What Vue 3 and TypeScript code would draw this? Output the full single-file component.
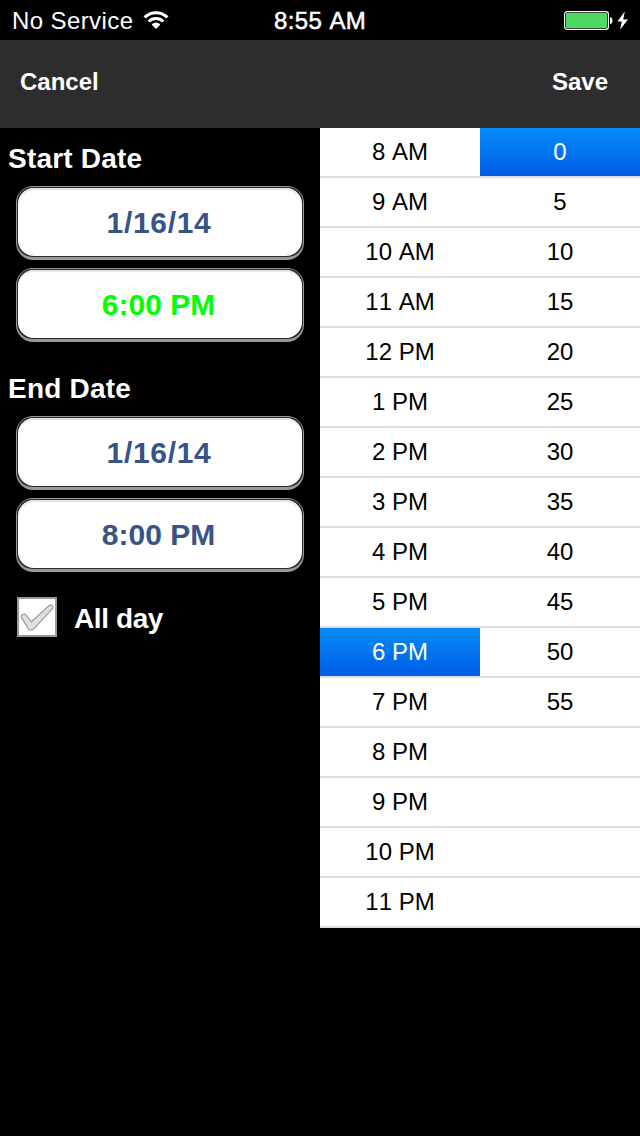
<script setup lang="ts">
interface Section {
  title: string
  date: string
  time: string
  active: boolean
}

const sections: Section[] = [
  { title: 'Start Date', date: '1/16/14', time: '6:00 PM', active: true },
  { title: 'End Date', date: '1/16/14', time: '8:00 PM', active: false },
]

const hours: string[] = [
  '8 AM', '9 AM', '10 AM', '11 AM', '12 PM', '1 PM', '2 PM', '3 PM',
  '4 PM', '5 PM', '6 PM', '7 PM', '8 PM', '9 PM', '10 PM', '11 PM',
]
const minutes: string[] = hours.map((_, i) => (i < 12 ? String(i * 5) : ''))
const selectedHour = '6 PM'
const selectedMinute = '0'
</script>

<template>
  <div class="screen">
    <div class="status">
      <span class="carrier">No Service</span>
      <svg class="wifi" width="26" height="20" viewBox="0 0 26 20">
        <g fill="none" stroke="#fff" stroke-width="3.1">
          <path d="M1.6 7.4a16.2 16.2 0 0 1 22.8 0" />
          <path d="M5.7 11.5a10.3 10.3 0 0 1 14.6 0" />
        </g>
        <path d="M8.6 14.4a6.2 6.2 0 0 1 8.8 0L13 19z" fill="#fff" />
      </svg>
      <span class="clock">8:55 AM</span>
      <svg class="battery" width="66" height="24" viewBox="0 0 66 24">
        <rect x="0.6" y="2.6" width="43.8" height="17.8" rx="2.6" fill="none" stroke="#fff" stroke-width="1.2" />
        <rect x="2" y="4" width="41" height="15" rx="1" fill="#4cd964" />
        <path d="M46 8.2c3.4 0 3.4 6.8 0 6.8z" fill="#fff" />
        <path d="M60.8 2.6L53.4 12.6h4.4L56 20.8l8-10.3h-4.7z" fill="#fff" />
      </svg>
    </div>
    <div class="toolbar">
      <span>Cancel</span>
      <span>Save</span>
    </div>
    <div class="body">
      <div class="form">
        <section v-for="s in sections" :key="s.title" class="section">
          <h2 class="title">{{ s.title }}</h2>
          <div class="field"><div class="rim"><div class="face date">{{ s.date }}</div></div></div>
          <div class="field"><div class="rim"><div class="face" :class="{ active: s.active }">{{ s.time }}</div></div></div>
        </section>
        <div class="allday">
          <svg width="40" height="40" viewBox="0 0 40 40">
            <rect x="1" y="1" width="38" height="38" fill="#fff" stroke="#999" stroke-width="2" />
            <path
              d="M4.6 20.6c-1.200-2.800 2.600-4.600 4.600-2.200l5.200 6.400L32 8.600c2.400-1.800 5 .8 3.400 3.200L17 31.600c-2 2.200-4.600 2.200-6-.2z"
              fill="#dfdfdf" stroke="#9c9c9c" stroke-width="1.2" stroke-linejoin="round"
            />
          </svg>
          <span class="label">All day</span>
        </div>
      </div>
      <div class="picker">
        <div class="column">
          <div v-for="h in hours" :key="h" class="row" :class="{ selected: h === selectedHour }">{{ h }}</div>
        </div>
        <div class="column">
          <div v-for="(m, i) in minutes" :key="i" class="row" :class="{ selected: m === selectedMinute }">{{ m }}</div>
        </div>
      </div>
    </div>
  </div>
</template>

<style>
html,
body {
  margin: 0;
  background: #000;
}
</style>

<style scoped>
.screen {
  width: 640px;
  height: 1136px;
  overflow: hidden;
  background: #000;
  color: #fff;
  font-family: "Liberation Sans", Arial, sans-serif;
  font-size: 24px;
  font-kerning: none;
}
.status {
  height: 40px;
  display: flex;
  align-items: center;
  line-height: 40px;
}
.carrier {
  width: 131px;
  padding: 2px 0 0 12px;
  letter-spacing: 0.4px;
  line-height: 40px;
  white-space: nowrap;
}
.wifi {
  margin-bottom: 1px;
}
.clock {
  margin-left: 105px;
  width: 93px;
  padding-top: 2px;
  letter-spacing: 0.4px;
  white-space: nowrap;
  -webkit-text-stroke: 0.5px #fff;
}
.battery {
  margin: 2px 0 0 197px;
}
.toolbar {
  height: 88px;
  padding: 0 32px 4px 20px;
  box-sizing: border-box;
  display: flex;
  align-items: center;
  justify-content: space-between;
  background: #2d2d2d;
  font-weight: bold;
}
.body {
  display: flex;
  align-items: flex-start;
}
.form {
  width: 320px;
  box-sizing: border-box;
  padding: 8px 16px 0;
}
.section {
  display: flex;
  flex-direction: column;
  gap: 8px;
  height: 230px;
}
.title {
  margin: 0 0 -2px -8px;
  padding-top: 2px;
  font-size: 28px;
  line-height: 42px;
  letter-spacing: 0.2px;
}
.field {
  height: 74px;
  box-sizing: border-box;
  padding: 1px 1px 3px;
  border-radius: 17px;
  background: #999;
}
.rim {
  padding: 1px;
  border-radius: 15px;
  background: #2c2c2c;
}
.face {
  height: 68px;
  box-sizing: border-box;
  border-radius: 16px;
  background: #fff;
  box-shadow: inset 0 2px 1px #e4e4e4;
  color: #385487;
  font-size: 30px;
  font-weight: bold;
  line-height: 69px;
  text-align: center;
  padding-right: 3px;
}
.date {
  padding-right: 2px;
  letter-spacing: 0.7px;
}
.active {
  color: #0f0;
}
.allday {
  display: flex;
  align-items: center;
  gap: 17px;
  margin: 1px 0 0 1px;
  font-size: 28px;
  font-weight: bold;
  letter-spacing: -0.4px;
}
.label {
  padding-top: 3px;
}
.picker {
  width: 320px;
  display: flex;
  background: #fff;
  color: #000;
}
.column {
  flex: 1;
}
.row {
  height: 48px;
  line-height: 48px;
  border-bottom: 2px solid #dedede;
  text-align: center;
}
.selected {
  color: #fff;
  background: linear-gradient(#058cf5, #015de6) padding-box;
}
</style>
